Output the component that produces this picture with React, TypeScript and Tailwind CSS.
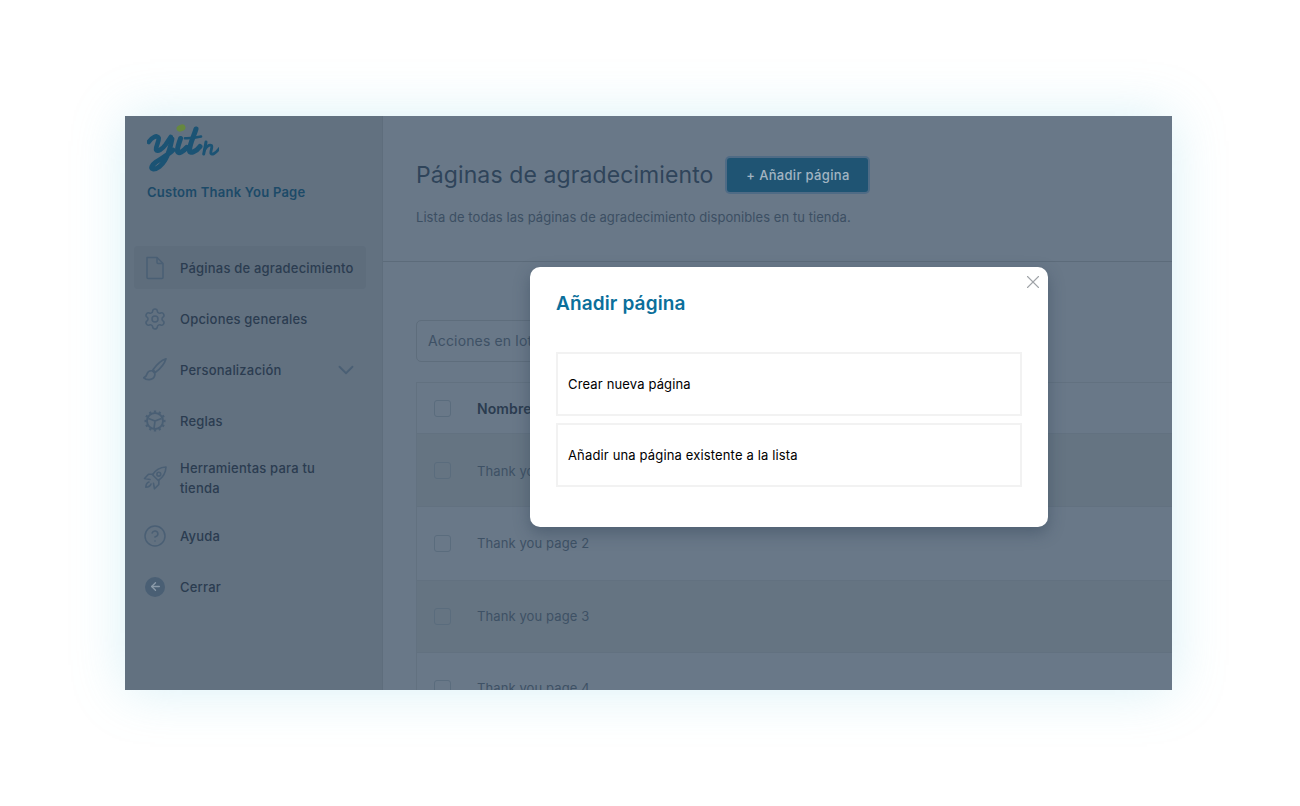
import React from "react";
import { Settings, ChevronDown, CircleHelp, ArrowLeft, X } from "lucide-react";

const iconCls = "w-[24px] h-[24px] text-[#4a5f74]";

function File() {
  return (
    <svg viewBox="0 0 24 24" className={iconCls} fill="none" stroke="currentColor" strokeWidth="1.5" strokeLinejoin="round">
      <path d="M4 1.500h10l6 6v14a1 1 0 0 1-1 1H5a1 1 0 0 1-1-1z" />
      <path d="M14 1.500v5a1 1 0 0 0 1 1h5" />
    </svg>
  );
}

function Brush() {
  return (
    <svg viewBox="0 0 24 24" className={iconCls} fill="none" stroke="currentColor" strokeWidth="1.700" strokeLinejoin="round" strokeLinecap="round">
      <path d="M23 .8c-4.500 1.500-9.500 6-13 11l2.500 2.500c4.800-3.500 9-8.500 10.500-13.500z" />
      <path d="M9.300 12.800c-2.500-.3-4.600 1-5.200 3-.4 1.800-1.800 3.200-3.300 4 2.500 2.500 9 2.800 10.600-1.300.7-1.800.3-3.700-.6-4.300z" />
    </svg>
  );
}

function Cog() {
  const teeth = Array.from({ length: 12 }, (_, i) => i * 30);
  return (
    <svg viewBox="0 0 24 24" className={iconCls} fill="none" stroke="currentColor" strokeWidth="1.900">
      <circle cx="12" cy="12" r="8" />
      {teeth.map((a) => (
        <line key={a} x1="12" y1="1.500" x2="12" y2="4.500" transform={`rotate(${a} 12 12)`} strokeWidth="2.300" />
      ))}
      <path d="M12 12 5.500 9.500M12 12l6.500-2.500M12 12l-1 7.500" strokeWidth="1.700" />
    </svg>
  );
}

function Rocket() {
  return (
    <svg viewBox="0 0 24 24" className={iconCls} fill="none" stroke="currentColor" strokeWidth="1.600" strokeLinejoin="round" strokeLinecap="round">
      <path d="M23 1c-5.800.3-10.500 3-13.500 7.700l5.800 5.800c4.700-3 7.400-7.700 7.700-13.500z" />
      <circle cx="15.800" cy="8.200" r="1.900" />
      <path d="M10 8.200H5.500L1.500 12.500l5.500 1M15.800 14v4.500L11.500 22.800l-1-5.500" />
      <path d="M6 16c-1.900.6-3 2.200-3.200 5.200 3-.2 4.600-1.300 5.200-3.200" />
    </svg>
  );
}

function Logo() {
  return (
    <svg viewBox="0 0 72 48" className="w-[72px] h-[48px] block" fill="none" strokeLinecap="round" strokeLinejoin="round">
      <ellipse cx="34" cy="4" rx="4.600" ry="3.300" fill="#66883f" transform="rotate(-20 34 4)" />
      <g stroke="#1b5374">
        <path d="M1.800 18c2.500-4.500 8.500-7.500 9.800-4.200 1 3-3.500 9.500-2.400 12.200 1 2 6-.5 9.500-5.500l5-7.500" strokeWidth="4.600" />
        <path d="M25 15c-1.500 8-3.500 15-7 21-3 5-8 9.500-12 9-3-.5-1-4 3-7 5-3.500 12-7 17-12" strokeWidth="4.800" />
        <path d="M33.500 14.500c-1.500 5-4 10.500-2.800 13.500 1 2 5.500-.5 9-4.500" strokeWidth="5" />
        <path d="M49 5c-2 7-6.500 15-6.500 21.500 0 3.500 6.500 1.500 10.500-4" strokeWidth="5" />
        <path d="M38 14.200c5.500.2 11-.4 16-1.600" strokeWidth="2.600" />
        <path d="M59 18c-.6 4-1.500 8-2.300 12" strokeWidth="3" />
        <path d="M57.500 26c2-3 5-5.500 7-4.500 1.500 1-1.500 6-.5 8 1 1.500 4.500 0 8.300-5" strokeWidth="2.800" />
      </g>
    </svg>
  );
}

const Item = ({ icon, label, active = false, chevron = false, cls = "" }: { icon: React.ReactNode; label: React.ReactNode; active?: boolean; chevron?: boolean; cls?: string }) => (
  <div className={`flex items-center h-[43px] rounded-[4px] pl-[9px] pr-[7px] ${active ? "bg-[#5e6d7c]" : ""} ${cls}`}>
    <span className="w-[24px] flex justify-center shrink-0">{icon}</span>
    <span className="ml-[13px] flex-1 text-[13px] leading-[20px] font-medium tracking-[0.2px] text-[#2b3c50]">{label}</span>
    {chevron && <ChevronDown className="w-[26px] h-[26px] text-[#4a5f74]" strokeWidth={1.700} />}
  </div>
);

const Row = ({ label, h, dark = false, bold = false, shift = "" }: { label: string; h: number; dark?: boolean; bold?: boolean; shift?: string }) => (
  <div style={{ height: h }} className={`flex items-center pl-[17px] border-b border-[#627180] ${dark ? "bg-[#657482]" : ""}`}>
    <span className="w-[17px] h-[17px] rounded-[3px] border border-[#5a6c7d] shrink-0" />
    <span className={`ml-[26px] tracking-[0.1px] ${bold ? "text-[14px] font-semibold text-[#2b3c50]" : "text-[13px] text-[#3e5165]"} ${shift}`}>{label}</span>
  </div>
);

export default function App() {
  return (
    <div className="w-[1300px] h-[806px] bg-white pt-[116px] pl-[125px] overflow-hidden font-['Inter',sans-serif]">
      <div className="relative w-[1047px] h-[574px] shadow-[0_0_50px_rgba(120,205,225,0.28)]">
        <div className="w-full h-full flex overflow-hidden bg-[#697888]">
          <aside className="w-[258px] shrink-0 bg-[#627180] border-r border-[#5e6d7c] pl-[9px] pr-[16px]">
            <div className="pl-[13px] pt-[8px]">
              <Logo />
              <div className="mt-[12px] text-[13px] leading-[16px] font-semibold tracking-[0.24px] text-[#1c4a68]">Custom Thank You Page</div>
            </div>
            <div className="mt-[46px] flex flex-col">
              <Item active icon={<File />} label="Páginas de agradecimiento" />
              <Item cls="mt-[8px]" icon={<Settings className={iconCls} strokeWidth={1.500} />} label="Opciones generales" />
              <Item cls="mt-[8px]" icon={<Brush />} label="Personalización" chevron />
              <Item cls="mt-[8px]" icon={<Cog />} label="Reglas" />
              <Item cls="mt-[9px] h-[53px]" icon={<Rocket />} label={<>Herramientas para tu<br />tienda</>} />
              <Item cls="mt-[10px]" icon={<CircleHelp className={iconCls} strokeWidth={1.500} />} label="Ayuda" />
              <Item cls="mt-[8px]" icon={
                <span className="w-[20px] h-[20px] rounded-full bg-[#4a5f74] flex items-center justify-center">
                  <ArrowLeft className="w-[13px] h-[13px] text-[#8b9aa9]" strokeWidth={2.500} />
                </span>
              } label="Cerrar" />
            </div>
          </aside>
          <main className="flex-1 min-w-0">
            <div className="h-[146px] border-b border-[#5c6b7a] pl-[33px] pt-[41px]">
              <div className="flex items-center">
                <h1 className="text-[23px] leading-[36px] text-[#2f445a] tracking-[0.1px]">Páginas de agradecimiento</h1>
                <button className="ml-[14px] w-[141px] h-[34px] pt-[1px] rounded-[3px] bg-[#1f5473] shadow-[0_0_0_2px_#4f6b85] text-[13px] font-medium tracking-[0.32px] text-[#a3b4c2]">+ Añadir página</button>
              </div>
              <p className="mt-[14px] text-[13px] leading-[20px] tracking-[0.06px] text-[#3c4f63]">Lista de todas las páginas de agradecimiento disponibles en tu tienda.</p>
            </div>
            <div className="pl-[33px] pt-[58px]">
              <div className="w-[160px] h-[42px] rounded-[5px] border border-[#5e6d7c] flex items-center pl-[11px] pb-[2px] text-[14px] tracking-[0.15px] text-[#3e5165]">Acciones en lote</div>
              <div className="mt-[20px] border-l border-t border-[#627180]">
                <Row label="Nombre" h={51} bold />
                <Row label="Thank you page 1" h={73} dark shift="mt-[3px]" />
                <Row label="Thank you page 2" h={74} />
                <Row label="Thank you page 3" h={72} dark />
                <Row label="Thank you page 4" h={72} />
              </div>
            </div>
          </main>
        </div>
        <div className="absolute left-[405px] top-[151px] w-[518px] h-[260px] bg-white rounded-[10px] shadow-[0_6px_16px_rgba(40,60,80,0.4)] px-[26px]">
          <X className="absolute right-[4px] top-[4px] w-[22px] h-[22px] text-[#a0a4a8]" strokeWidth={1.200} />
          <h2 className="pt-[23px] text-[19px] leading-[28px] font-semibold tracking-[0.13px] text-[#0b6f9b]">Añadir página</h2>
          <div className="mt-[34px] h-[64px] border-2 border-[#f2f2f2] flex items-center pl-[10px] pt-[2px] text-[13px] tracking-[0.15px] text-black">Crear nueva página</div>
          <div className="mt-[7px] h-[64px] border-2 border-[#f2f2f2] flex items-center pl-[10px] pt-[2px] text-[13px] tracking-[0.15px] text-black">Añadir una página existente a la lista</div>
        </div>
      </div>
    </div>
  );
}
